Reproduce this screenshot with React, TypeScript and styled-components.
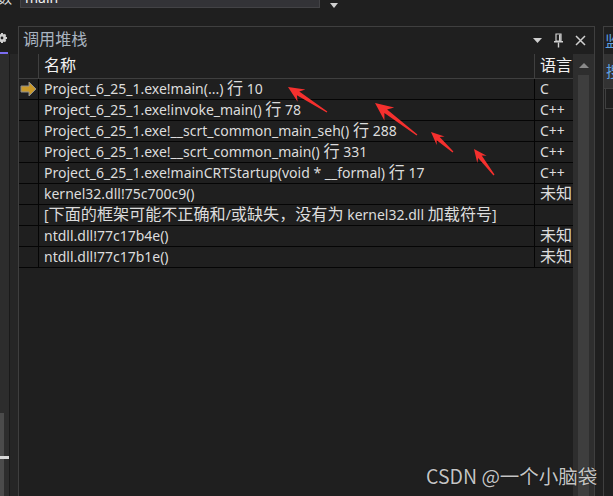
import React from 'react';
import styled, { createGlobalStyle } from 'styled-components';

const bg = '#1f1f1f';
const border = '#3f3f3f';
const text = '#dcdcdc';
const uiFont = '"Noto Sans", "Noto Sans CJK SC", sans-serif';

const GlobalStyle = createGlobalStyle`
  html, body {
    margin: 0;
    padding: 0;
    background: ${bg};
    overflow: hidden;
  }
  * { box-sizing: border-box; }
`;

const Screen = styled.div`
  position: relative;
  width: 613px;
  height: 496px;
  overflow: hidden;
  background: ${bg};
  font-family: ${uiFont};
  color: ${text};
  display: flex;
  flex-direction: column;
`;

// CJK glyphs in the VS font run wider than the Latin ones
const Han = styled.span`
  font-family: "Noto Sans CJK SC", sans-serif;
  font-size: 16.1px;
  line-height: 1;
`;

const CJK = /([\u3000-\u303f\u4e00-\u9fff\uff00-\uffef]+)/;

function Mixed({ children }: { children: string }) {
  return (
    <>
      {children.split(CJK).map((part, i) =>
        i % 2 === 1 ? <Han key={i}>{part}</Han> : part
      )}
    </>
  );
}

const TopBar = styled.div`
  height: 38px;
  margin-top: -12px;
  display: flex;
  align-items: flex-start;
  flex-shrink: 0;
`;

const TopLabel = styled.div`
  width: 22px;
  height: 20px;
  font-size: 14px;
  line-height: 20px;
  color: ${text};
  margin-left: -2px;
`;

const Combo = styled.div`
  width: 300px;
  height: 20px;
  background: #333337;
  border: 1px solid #434346;
  font-size: 14px;
  line-height: 18px;
  padding-left: 4px;
  color: #f0f0f0;
`;

const ComboArrow = styled.div`
  margin: 15px 0 0 10px;
  width: 0;
  height: 0;
  border-left: 4px solid transparent;
  border-right: 4px solid transparent;
  border-top: 5px solid #d0d0d0;
`;

const Body = styled.div`
  flex: 1;
  display: flex;
  min-height: 0;
`;

const LeftRail = styled.div`
  width: 18px;
  display: flex;
  flex-direction: column;
  flex-shrink: 0;
`;

const RailHead = styled.div`
  height: 26px;
  display: flex;
  align-items: flex-start;
  padding-top: 7px;
  margin-left: -3px;
`;

const RailAccent = styled.div`
  height: 2px;
  width: 8px;
  background: #7b6cf0;
`;

const RailBody = styled.div`
  flex: 1;
  display: flex;
`;

const RailOuter = styled.div`
  width: 9px;
  background: #2d2d2d;
  display: flex;
  flex-direction: column;
  justify-content: flex-end;
`;

const RailThumb = styled.div`
  height: 83px;
  background: linear-gradient(to right, #4b4b4b 4px, transparent 4px);
  padding-top: 43px;
`;

const RailMark = styled.div`
  height: 3px;
  width: 9px;
  background: #d8d8d8;
`;

const RailInner = styled.div`
  width: 9px;
  background: #262626;
  border-left: 1px solid #1a1a1a;
`;

const Panel = styled.section`
  width: 577px;
  border: 1px solid ${border};
  border-bottom: none;
  display: flex;
  flex-direction: column;
  flex-shrink: 0;
`;

const TitleBar = styled.header`
  height: 27px;
  display: flex;
  align-items: center;
  padding: 0 8px 0 4px;
  flex-shrink: 0;
`;

const Title = styled.div`
  flex: 1;
  font-size: 14px;
  color: #a9b4c0;
  margin-top: -3px;
`;

const TitleTools = styled.div`
  display: flex;
  align-items: center;
  gap: 12px;
  color: #cfcfcf;
`;

const PanelBody = styled.div`
  flex: 1;
  display: flex;
  min-height: 0;
`;

const Table = styled.div`
  flex: 1;
  display: flex;
  flex-direction: column;
`;

const HeaderRow = styled.div`
  height: 25px;
  display: grid;
  grid-template-columns: 20px 1fr 38px;
  border-bottom: 1px solid ${border};
  font-size: 14px;
  color: #f2f2f2;
`;

const HeadCell = styled.div<{ $sep?: boolean }>`
  border-right: ${p => (p.$sep ? `1px solid ${border}` : 'none')};
  padding-left: 5px;
  line-height: 24px;
  white-space: nowrap;
  overflow: hidden;
`;

const Row = styled.div`
  height: 21px;
  display: grid;
  grid-template-columns: 20px 1fr 38px;
  border-bottom: 1px solid #050505;
  font-size: 14px;
`;

const Cell = styled.div<{ $sep?: boolean }>`
  border-right: ${p => (p.$sep ? '1px solid #050505' : 'none')};
  padding-left: 5px;
  line-height: 20px;
  white-space: nowrap;
  overflow: hidden;
`;

const MarkerCell = styled.div`
  border-right: 1px solid #050505;
  display: flex;
  align-items: center;
  padding-left: 1px;
`;

const ScrollBar = styled.div`
  width: 21px;
  background: #2e2e2e;
  display: flex;
  flex-direction: column;
  align-items: center;
  flex-shrink: 0;
`;

const ScrollUp = styled.div`
  margin-top: 9px;
  width: 0;
  height: 0;
  border-left: 5px solid transparent;
  border-right: 5px solid transparent;
  border-bottom: 5px solid #8a8a8a;
`;

const ScrollThumb = styled.div`
  margin-top: 7px;
  width: 11px;
  flex: 1;
  background: #3e3e3e;
`;

const Gap = styled.div`
  width: 8px;
  flex-shrink: 0;
`;

const RightPanel = styled.section`
  flex: 1;
  border-left: 1px solid ${border};
  border-top: 1px solid ${border};
  display: flex;
  flex-direction: column;
  overflow: hidden;
`;

const RightTitle = styled.div`
  height: 27px;
  padding: 3px 0 0 1px;
  font-size: 15px;
  color: #5ea0e0;
  white-space: nowrap;
`;

const RightTab = styled.div`
  height: 35px;
  background: #333333;
  font-size: 15px;
  color: #5ea0e0;
  padding: 6px 0 0 2px;
  border-bottom: 1px solid ${border};
  white-space: nowrap;
`;

const RightSub = styled.div`
  height: 20px;
  border-left: 1px solid ${border};
  border-bottom: 1px solid ${border};
  margin-left: 1px;
`;

const Watermark = styled.div`
  position: absolute;
  left: 426px;
  top: 461px;
  font-family: "Noto Sans CJK SC", "Noto Sans", sans-serif;
  font-size: 19.5px;
  color: #c4c4c4;
  text-shadow: 0 0 1px #000;
  white-space: nowrap;
`;

const Overlay = styled.svg`
  position: absolute;
  left: 0;
  top: 0;
  pointer-events: none;
`;

type Frame = { name: string; lang: string; current?: boolean };

const frames: Frame[] = [
  { name: 'Project_6_25_1.exe!main(...) 行 10', lang: 'C', current: true },
  { name: 'Project_6_25_1.exe!invoke_main() 行 78', lang: 'C++' },
  { name: 'Project_6_25_1.exe!__scrt_common_main_seh() 行 288', lang: 'C++' },
  { name: 'Project_6_25_1.exe!__scrt_common_main() 行 331', lang: 'C++' },
  { name: 'Project_6_25_1.exe!mainCRTStartup(void * __formal) 行 17', lang: 'C++' },
  { name: 'kernel32.dll!75c700c9()', lang: '未知' },
  { name: '[下面的框架可能不正确和/或缺失，没有为 kernel32.dll 加载符号]', lang: '' },
  { name: 'ntdll.dll!77c17b4e()', lang: '未知' },
  { name: 'ntdll.dll!77c17b1e()', lang: '未知' },
];

// red annotation arrows: tip, tail, head length
const arrows: [number, number, number, number, number][] = [
  [288, 87, 327, 112, 16],
  [375, 103, 417, 135, 18],
  [431, 132, 453, 152, 13],
  [474, 149, 494, 175, 13],
];

function arrowPoints(tx: number, ty: number, sx: number, sy: number, len: number) {
  const dx = tx - sx;
  const dy = ty - sy;
  const d = Math.hypot(dx, dy);
  const ux = dx / d;
  const uy = dy / d;
  const nx = -uy;
  const ny = ux;
  const hw = len * 0.45;
  const bx = tx - ux * len;
  const by = ty - uy * len;
  const nbx = tx - ux * len * 0.75;
  const nby = ty - uy * len * 0.75;
  const pts = [
    [sx + nx * 0.6, sy + ny * 0.6],
    [nbx + nx * 2.2, nby + ny * 2.2],
    [bx + nx * hw, by + ny * hw],
    [tx, ty],
    [bx - nx * hw, by - ny * hw],
    [nbx - nx * 2.2, nby - ny * 2.2],
    [sx - nx * 0.6, sy - ny * 0.6],
  ];
  return pts.map(p => `${p[0].toFixed(1)},${p[1].toFixed(1)}`).join(' ');
}

const Gear = () => (
  <svg width="10" height="10" viewBox="0 0 10 10">
    <circle cx="5" cy="5" r="3" fill="none" stroke="#d0d0d0" strokeWidth="2" />
    {[0, 45, 90, 135].map(a => (
      <rect key={a} x="4" y="0" width="2" height="10" fill="#d0d0d0" transform={`rotate(${a} 5 5)`} />
    ))}
    <circle cx="5" cy="5" r="1.4" fill={bg} />
  </svg>
);

const CurrentArrow = () => (
  <svg width="17" height="16" viewBox="0 0 17 16">
    <path d="M1 5 H9 V1 L16 8 L9 15 V11 H1 Z" fill="#c9992a" stroke="#8e8e8e" strokeWidth="1" />
  </svg>
);

const Pin = () => (
  <svg width="9" height="15" viewBox="0 0 9 15">
    <path d="M2 1 H7 V8 H2 Z" fill="none" stroke="#cfcfcf" strokeWidth="1.2" />
    <rect x="5" y="1.5" width="1.6" height="6.5" fill="#cfcfcf" />
    <rect x="0" y="8" width="9" height="1.5" fill="#cfcfcf" />
    <rect x="3.8" y="9.5" width="1.4" height="5" fill="#cfcfcf" />
  </svg>
);

const Close = () => (
  <svg width="11" height="11" viewBox="0 0 11 11">
    <path d="M1 1 L10 10 M10 1 L1 10" stroke="#cfcfcf" strokeWidth="1.5" />
  </svg>
);

const Caret = () => (
  <svg width="9" height="6" viewBox="0 0 9 6">
    <path d="M0 0 H9 L4.5 5 Z" fill="#cfcfcf" />
  </svg>
);

export default function App() {
  return (
    <Screen>
      <GlobalStyle />
      <TopBar>
        <TopLabel>数</TopLabel>
        <Combo>main</Combo>
        <ComboArrow />
      </TopBar>
      <Body>
        <LeftRail>
          <RailHead>
            <Gear />
          </RailHead>
          <RailAccent />
          <RailBody>
            <RailOuter>
              <RailThumb>
                <RailMark />
              </RailThumb>
            </RailOuter>
            <RailInner />
          </RailBody>
        </LeftRail>
        <Panel>
          <TitleBar>
            <Title><Mixed>调用堆栈</Mixed></Title>
            <TitleTools>
              <Caret />
              <Pin />
              <Close />
            </TitleTools>
          </TitleBar>
          <PanelBody>
            <Table>
              <HeaderRow>
                <HeadCell $sep />
                <HeadCell $sep><Mixed>名称</Mixed></HeadCell>
                <HeadCell><Mixed>语言</Mixed></HeadCell>
              </HeaderRow>
              {frames.map(f => (
                <Row key={f.name}>
                  <MarkerCell>{f.current && <CurrentArrow />}</MarkerCell>
                  <Cell $sep><Mixed>{f.name}</Mixed></Cell>
                  <Cell><Mixed>{f.lang}</Mixed></Cell>
                </Row>
              ))}
            </Table>
            <ScrollBar>
              <ScrollUp />
              <ScrollThumb />
            </ScrollBar>
          </PanelBody>
        </Panel>
        <Gap />
        <RightPanel>
          <RightTitle>监视 1</RightTitle>
          <RightTab>搜索</RightTab>
          <RightSub />
        </RightPanel>
      </Body>
      <Watermark>CSDN @一个小脑袋</Watermark>
      <Overlay width="613" height="496">
        {arrows.map(([tx, ty, sx, sy, len], i) => (
          <polygon key={i} points={arrowPoints(tx, ty, sx, sy, len)} fill="#f5302e" />
        ))}
      </Overlay>
    </Screen>
  );
}
